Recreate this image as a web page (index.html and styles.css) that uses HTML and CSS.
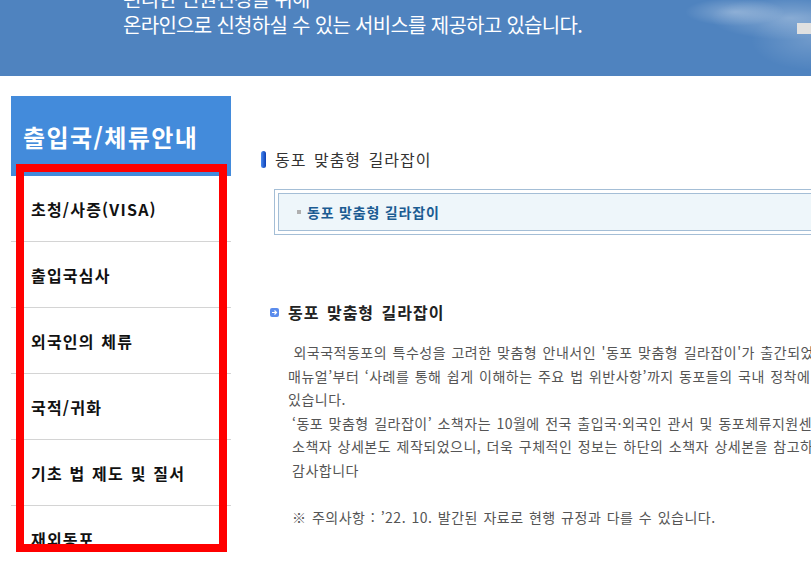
FILE: index.html
```html
<!DOCTYPE html>
<html lang="ko">
<head>
    <meta charset="UTF-8">
    <meta name="viewport" content="width=device-width, initial-scale=1.0">
    <title>동포 맞춤형 길라잡이</title>
    <link rel="stylesheet" href="styles.css">
</head>
<body>
    <header class="visual">
        <div class="visual-text">
            <p>편리한 민원신청을 위해</p>
            <p>온라인으로 신청하실 수 있는 서비스를 제공하고 있습니다.</p>
        </div>
        <span class="visual-tab"></span>
    </header>

    <div class="wrap">
        <aside class="lnb">
            <h2 class="lnb-title">출입국/체류안내</h2>
            <ul class="lnb-menu">
                <li><a href="#">초청/사증(VISA)</a></li>
                <li><a href="#">출입국심사</a></li>
                <li><a href="#">외국인의 체류</a></li>
                <li><a href="#">국적/귀화</a></li>
                <li><a href="#">기초 법 제도 및 질서</a></li>
                <li><a href="#">재외동포</a></li>
            </ul>
        </aside>

        <main class="content">
            <h3 class="page-title">동포 맞춤형 길라잡이</h3>

            <div class="tab-box">
                <div class="tab-inner">
                    <a href="#" class="tab-link">동포 맞춤형 길라잡이</a>
                </div>
            </div>

            <h4 class="sub-title">
                <svg class="sub-icon" width="9" height="9" viewBox="0 0 9 9">
                    <rect width="9" height="9" rx="2" fill="#5b8cec"/>
                    <path d="M2 4.5h4.5M4.5 2.5l2 2-2 2" stroke="#fff" stroke-width="1.2" fill="none"/>
                </svg>
                동포 맞춤형 길라잡이
            </h4>

            <div class="text">
                <p class="line">&nbsp;외국국적동포의 특수성을 고려한 맞춤형 안내서인 '동포 맞춤형 길라잡이'가 출간되었습니다. 이번 안내서는 ‘동포 체류</p>
                <p class="line">매뉴얼’부터 ‘사례를 통해 쉽게 이해하는 주요 법 위반사항’까지 동포들의 국내 정착에 필요한 내용을 담고</p>
                <p class="line">있습니다.</p>
                <div class="text-block">
                    <p class="line">‘동포 맞춤형 길라잡이’ 소책자는 10월에 전국 출입국·외국인 관서 및 동포체류지원센터에 배포되었으며,</p>
                    <p class="line">소책자 상세본도 제작되었으니, 더욱 구체적인 정보는 하단의 소책자 상세본을 참고하여 주시기 바랍니다.</p>
                    <p class="line">감사합니다</p>
                    <p class="line">&nbsp;</p>
                    <p class="line">※ 주의사항 : ’22. 10. 발간된 자료로 현행 규정과 다를 수 있습니다.</p>
                </div>
            </div>
        </main>
    </div>

    <div class="mark-box"></div>
</body>
</html>
```

FILE: styles.css
```css
* {
    box-sizing: border-box;
}
body {
    margin: 0;
    width: 811px;
    height: 568px;
    overflow: hidden;
    position: relative;
    font-family: "Noto Sans CJK KR", "Noto Sans", sans-serif;
    color: #555;
    background-color: #fff;
}
p, h2, h3, h4, ul {
    margin: 0;
    padding: 0;
}
a {
    color: inherit;
    text-decoration: none;
}

/* top visual */
.visual {
    display: flex;
    height: 76px;
    overflow: hidden;
    padding-left: 123px;
    background-color: #4f83bf;
    background-image:
        radial-gradient(ellipse 50px 14px at 735px 12px, rgba(255, 255, 255, 0.3), rgba(255, 255, 255, 0)),
        radial-gradient(ellipse 80px 22px at 790px 18px, rgba(255, 255, 255, 0.3), rgba(255, 255, 255, 0)),
        radial-gradient(ellipse 60px 30px at 811px 40px, rgba(255, 255, 255, 0.18), rgba(255, 255, 255, 0));
}
.visual-text {
    margin-top: -14px;
    color: #fff;
    font-size: 20px;
    line-height: 26px;
    letter-spacing: -0.7px;
    white-space: nowrap;
}
.visual-tab {
    margin-left: auto;
    margin-top: 23px;
    width: 14px;
    height: 11px;
    background-color: #e0e0e0;
}

/* layout */
.wrap {
    display: flex;
    width: 1300px;
    padding: 20px 0 0 11px;
}

/* left menu */
.lnb {
    width: 220px;
    flex-shrink: 0;
}
.lnb-title {
    height: 80px;
    display: flex;
    align-items: center;
    padding-left: 12px;
    background-color: #438bdb;
    color: #fff;
    font-size: 24px;
    font-weight: bold;
    letter-spacing: 1.4px;
}
.lnb-menu {
    list-style: none;
}
.lnb-menu li {
    border-bottom: 1px solid #d4d4d4;
}
.lnb-menu a {
    display: flex;
    align-items: center;
    height: 65px;
    padding-left: 20px;
    color: #111;
    font-size: 16px;
    font-weight: bold;
    letter-spacing: 1.2px;
    word-spacing: 1px;
}

/* content */
.content {
    flex: 1;
    margin-left: 30px;
}
.page-title {
    display: flex;
    align-items: center;
    margin-top: 53px;
    height: 20px;
    font-size: 16px;
    font-weight: normal;
    color: #333;
    letter-spacing: 1px;
    word-spacing: 2px;
}
.page-title::before {
    content: "";
    width: 5px;
    height: 17px;
    margin-right: 9px;
    border-radius: 3px;
    background: linear-gradient(to right, #4a8af0, #0b3eb4);
}
.tab-box {
    margin: 20px 0 0 13px;
    padding: 3px;
    border: 1px solid #a4bed6;
}
.tab-inner {
    display: flex;
    align-items: center;
    padding: 8px 18px;
    border: 1px solid #a4bed6;
    background-color: #eef6fa;
}
.tab-link {
    display: flex;
    align-items: center;
    font-size: 14px;
    line-height: 20px;
    font-weight: bold;
    color: #1b5c92;
    letter-spacing: 0.8px;
}
.tab-link::before {
    content: "";
    width: 4px;
    height: 4px;
    margin-right: 6px;
    background-color: #b0b0b0;
}
.sub-title {
    display: flex;
    align-items: center;
    margin: 67px 0 0 9px;
    height: 20px;
    font-size: 16px;
    font-weight: bold;
    color: #222;
    letter-spacing: 1px;
    word-spacing: 2px;
}
.sub-icon {
    margin-right: 9px;
}
.text {
    margin: 19px 0 0 27px;
    font-size: 14px;
    line-height: 23.5px;
    color: #555;
    letter-spacing: 0.5px;
    word-spacing: 1px;
    white-space: nowrap;
}
.text-block {
    padding-left: 4px;
}

/* screenshot annotation */
.mark-box {
    position: absolute;
    left: 16px;
    top: 164px;
    width: 211px;
    height: 388px;
    border: 8px solid #ff0000;
}
```
